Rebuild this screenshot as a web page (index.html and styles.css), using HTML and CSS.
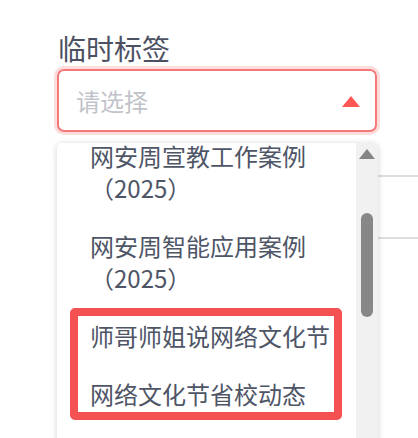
FILE: index.html
```html
<!DOCTYPE html>
<html lang="zh-CN">
<head>
<meta charset="utf-8">
<title>临时标签</title>
<link rel="stylesheet" href="styles.css">
</head>
<body>
<div class="page">
  <div class="field">
    <div class="label">临时标签</div>
    <div class="select">
      <span class="placeholder">请选择</span>
      <span class="caret"></span>
    </div>
  </div>
  <div class="bg-rows">
    <div class="bg-row"></div>
    <div class="bg-row"></div>
  </div>
  <div class="dropdown">
    <div class="options-viewport">
      <ul class="options">
        <li class="option">网安周宣教工作案例（2025）</li>
        <li class="option">网安周智能应用案例（2025）</li>
        <li class="option">师哥师姐说网络文化节</li>
        <li class="option">网络文化节省校动态</li>
      </ul>
    </div>
    <div class="scrollbar">
      <span class="arrow-up"></span>
      <span class="thumb"></span>
    </div>
  </div>
  <div class="annotation"></div>
</div>
</body>
</html>
```
FILE: styles.css
```css
html, body {
  margin: 0;
  padding: 0;
  background: #ffffff;
  overflow: hidden;
}
body {
  width: 418px;
  height: 438px;
  font-family: "Noto Sans CJK SC", "Noto Sans", sans-serif;
}
.page {
  position: relative;
  width: 418px;
  height: 438px;
  overflow: hidden;
}
.field {
  padding: 29px 0 0 57px;
}
.label {
  font-size: 28px;
  line-height: 38px;
  height: 38px;
  color: #4b5162;
  padding-left: 1px;
}
.select {
  margin-top: 2px;
  box-sizing: border-box;
  width: 320px;
  height: 63px;
  border: 2px solid #f47878;
  border-radius: 7px;
  box-shadow: 0 0 0 3px #fddcdc;
  display: flex;
  align-items: center;
  justify-content: space-between;
  padding: 0 15px 0 17px;
}
.placeholder {
  font-size: 24px;
  line-height: 32px;
  color: #c0c3c9;
}
.caret {
  width: 0;
  height: 0;
  border-left: 9px solid transparent;
  border-right: 9px solid transparent;
  border-bottom: 11px solid #ff5656;
  margin-top: 2px;
}
.bg-rows {
  margin: 43px 0 0 320px;
}
.bg-row {
  height: 60px;
  border-top: 2px solid #dddde2;
}
.dropdown {
  position: absolute;
  left: 57px;
  top: 143px;
  width: 321px;
  height: 330px;
  background: #ffffff;
  border-radius: 5px;
  box-shadow: 0 1px 6px rgba(0, 0, 0, 0.18);
  display: flex;
  overflow: hidden;
}
.options-viewport {
  flex: 1;
  overflow: hidden;
}
.options {
  list-style: none;
  margin: -16px 0 0 0;
  padding: 0;
}
.option {
  padding: 13px 20px 13px 33px;
  font-size: 24px;
  line-height: 32px;
  color: #4e5566;
}
.scrollbar {
  width: 22px;
  background: #f1f1f1;
  position: relative;
  display: flex;
  flex-direction: column;
  align-items: center;
}
.arrow-up {
  margin-top: 6px;
  width: 0;
  height: 0;
  border-left: 8px solid transparent;
  border-right: 8px solid transparent;
  border-bottom: 10px solid #858585;
}
.thumb {
  margin-top: 54px;
  width: 12px;
  height: 104px;
  border-radius: 6px;
  background: #878787;
}
.annotation {
  position: absolute;
  left: 70px;
  top: 308px;
  width: 272px;
  height: 112px;
  box-sizing: border-box;
  border: 8px solid #f45252;
  border-radius: 5px;
}
```
